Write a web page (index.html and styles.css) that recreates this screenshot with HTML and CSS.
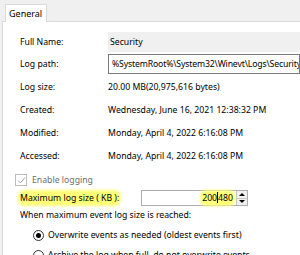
FILE: index.html
```html
<!DOCTYPE html>
<html lang="en">

<head>
    <meta charset="UTF-8">
    <title>Log Properties - Security</title>
    <link rel="stylesheet" href="styles.css">
</head>

<body>
    <div class="tabs">
        <div class="tab active">General</div>
    </div>
    <div class="panel">
        <div class="info">
            <div class="row">
                <span class="label">Full Name:</span>
                <span class="value readonly">Security</span>
            </div>
            <div class="row">
                <span class="label">Log path:</span>
                <span class="value textbox">%SystemRoot%\System32\Winevt\Logs\Security.evtx</span>
            </div>
            <div class="row">
                <span class="label">Log size:</span>
                <span class="value">20.00 MB(20,975,616 bytes)</span>
            </div>
            <div class="row">
                <span class="label">Created:</span>
                <span class="value">Wednesday, June 16, 2021 12:38:32 PM</span>
            </div>
            <div class="row">
                <span class="label">Modified:</span>
                <span class="value">Monday, April 4, 2022 6:16:08 PM</span>
            </div>
            <div class="row">
                <span class="label">Accessed:</span>
                <span class="value">Monday, April 4, 2022 6:16:08 PM</span>
            </div>
        </div>

        <label class="check disabled">
            <span class="box">
                <svg width="9" height="9" viewBox="0 0 9 9"><path d="M1 4.5 L3.5 7 L8 1.5" fill="none" stroke="#a0a0a0" stroke-width="1"/></svg>
            </span>
            Enable logging
        </label>

        <div class="maxsize">
            <span class="maxsize-label"><span class="mark">Maximum log size ( KB ):</span></span>
            <div class="spin">
                <span class="spin-value"><span class="mark">200<span class="caret"></span>480</span></span>
                <span class="spin-buttons">
                    <span class="arrow up"></span>
                    <span class="arrow down"></span>
                </span>
            </div>
        </div>

        <div class="when">When maximum event log size is reached:</div>

        <div class="options">
            <label class="radio"><span class="dot on"></span>Overwrite events as needed (oldest events first)</label>
            <label class="radio"><span class="dot"></span>Archive the log when full, do not overwrite events</label>
        </div>
    </div>
</body>

</html>
```

FILE: styles.css
```css
body {
    margin: 0;
    padding: 0;
    width: 300px;
    height: 255px;
    overflow: hidden;
    background: #f0f0f0;
    font-family: "Noto Sans", sans-serif;
    font-size: 8.7px;
    color: #000;
}

.tabs {
    display: flex;
    height: 21px;
    padding-left: 5px;
    box-sizing: border-box;
    align-items: flex-end;
}

.tab {
    height: 18px;
    padding: 0 4px 0 3px;
    border: 1px solid #d9d9d9;
    border-bottom: none;
    background: #fff;
    box-sizing: border-box;
    line-height: 17px;
    margin-bottom: -1px;
    position: relative;
    font-size: 9px;
}

.panel {
    margin-left: 2px;
    height: 234px;
    overflow: hidden;
    border-top: 1px solid #d9d9d9;
    border-left: 1px solid #d9d9d9;
    background: #fff;
    padding-left: 17px;
}

.info {
    padding-top: 9px;
}

.row {
    display: flex;
    align-items: center;
    height: 23px;
}

.row:first-child,
.row:nth-child(2) {
    height: 22px;
}

.label {
    width: 88px;
    flex: none;
}

.value {
    white-space: nowrap;
}

.readonly {
    flex: 1;
    background: #f0f0f0;
    height: 20px;
    line-height: 20px;
    padding-left: 2px;
}

.textbox {
    flex: 1;
    height: 20px;
    line-height: 18px;
    border: 1px solid #7a7a7a;
    box-sizing: border-box;
    padding-left: 3px;
    letter-spacing: -0.15px;
    overflow: hidden;
}

.check {
    display: flex;
    align-items: center;
    gap: 5px;
    height: 20px;
    margin-top: 3px;
    margin-left: -5px;
}

.check.disabled {
    color: #6d6d6d;
}

.box {
    width: 10px;
    height: 10px;
    border: 1px solid #bcbcbc;
    display: flex;
    align-items: center;
    justify-content: center;
}

.maxsize {
    display: flex;
    align-items: center;
    height: 16px;
}

.maxsize-label {
    width: 121px;
    flex: none;
}

.mark {
    background: #ffff78;
    border-radius: 4px;
    box-shadow: 0 0 3px 2px #ffff78;
}

.spin {
    width: 107px;
    height: 16px;
    border: 1px solid #adadad;
    box-sizing: border-box;
    display: flex;
}

.spin-value {
    flex: 1;
    text-align: right;
    line-height: 14px;
    padding-right: 3px;
}

.caret {
    display: inline-block;
    width: 1px;
    height: 11px;
    background: #000;
    vertical-align: -2px;
}

.spin-buttons {
    width: 10px;
    display: flex;
    flex-direction: column;
    border-left: 1px solid #c8c8c8;
}

.arrow {
    flex: 1;
    display: flex;
    align-items: center;
    justify-content: center;
    background: #f0f0f0;
}

.arrow.up {
    border-bottom: 1px solid #c8c8c8;
}

.arrow.up::before {
    content: "";
    border-left: 3px solid transparent;
    border-right: 3px solid transparent;
    border-bottom: 3px solid #000;
}

.arrow.down::before {
    content: "";
    border-left: 3px solid transparent;
    border-right: 3px solid transparent;
    border-top: 3px solid #000;
}

.when {
    height: 18px;
    line-height: 18px;
}

.options {
    padding-left: 13px;
    padding-top: 1px;
}

.radio {
    display: flex;
    align-items: center;
    gap: 4px;
    height: 20px;
}

.dot {
    width: 11px;
    height: 11px;
    border: 1px solid #333;
    border-radius: 50%;
    box-sizing: border-box;
    display: flex;
    align-items: center;
    justify-content: center;
}

.dot.on::before {
    content: "";
    width: 5px;
    height: 5px;
    border-radius: 50%;
    background: #000;
}
```
